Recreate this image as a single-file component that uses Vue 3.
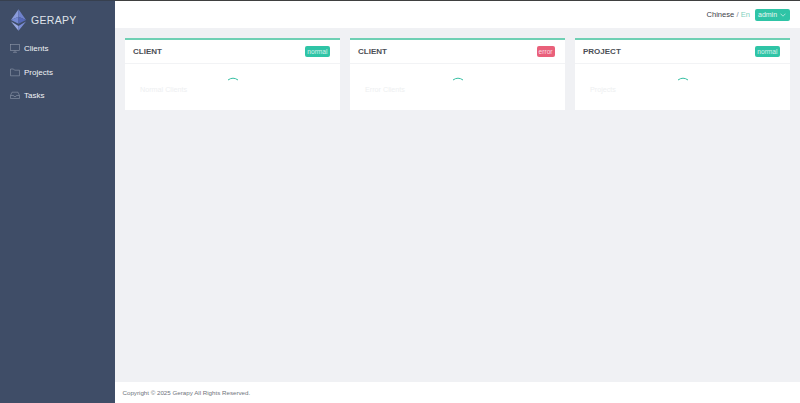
<script setup>
const cards = [
  { title: 'CLIENT', status: 'normal', kind: 'ok', label: 'Normal Clients' },
  { title: 'CLIENT', status: 'error', kind: 'bad', label: 'Error Clients' },
  { title: 'PROJECT', status: 'normal', kind: 'ok', label: 'Projects' }
]
</script>

<template>
  <div class="app">
    <aside class="side">
      <div class="brand">
        <svg class="logo" width="15" height="22" viewBox="0 0 16 23">
          <polygon points="8,0 0,11.5 8,8" fill="#8a9bdc" />
          <polygon points="8,0 16,11.5 8,8" fill="#6f82cc" />
          <polygon points="0,11.5 8,8 8,15.5" fill="#7488d2" />
          <polygon points="16,11.5 8,8 8,15.5" fill="#5568b8" />
          <polygon points="0,13 8,18 8,23" fill="#9aa9e4" />
          <polygon points="16,13 8,18 8,23" fill="#7a8dd6" />
        </svg>
        <span class="brand-name">GERAPY</span>
      </div>
      <nav class="menu">
        <div class="item">
          <svg width="10" height="9" viewBox="0 0 10 9" fill="none" stroke="#8f99ab" stroke-width=".6">
            <rect x=".5" y=".5" width="9" height="6" />
            <path d="M3 8.3h4M5 6.5v1.8" />
          </svg>
          <span>Clients</span>
        </div>
        <div class="item">
          <svg width="10" height="9" viewBox="0 0 10 9" fill="none" stroke="#8f99ab" stroke-width=".6">
            <path d="M.5 1h3l1 1.2h5v5.6h-9z" />
          </svg>
          <span>Projects</span>
        </div>
        <div class="item">
          <svg width="10" height="9" viewBox="0 0 10 9" fill="none" stroke="#8f99ab" stroke-width=".6">
            <path d="M2 1.2h6l1.5 3.3v3h-9v-3zM.5 4.5h3l.6 1h1.8l.6-1h3" />
          </svg>
          <span>Tasks</span>
        </div>
      </nav>
    </aside>
    <div class="main">
      <header class="top">
        <span class="lang">Chinese <i>/</i> <em>En</em></span>
        <button class="user">
          <span>admin</span>
          <svg width="6" height="4" viewBox="0 0 6 4" fill="none" stroke="#dff5ef" stroke-width=".7">
            <path d="M.5 .7 3 3.2 5.5 .7" />
          </svg>
        </button>
      </header>
      <section class="content">
        <article v-for="c in cards" :key="c.label" class="card">
          <div class="head">
            <h5>{{ c.title }}</h5>
            <span class="tag" :class="c.kind">{{ c.status }}</span>
          </div>
          <div class="body">
            <span class="label">{{ c.label }}</span>
            <svg class="spin" width="12" height="4" viewBox="0 0 12 4" fill="none" stroke="#36bfa3" stroke-width="1">
              <path d="M1 3Q6 -.6 11 3" />
            </svg>
          </div>
        </article>
      </section>
      <footer class="foot">Copyright © 2025 Gerapy All Rights Reserved.</footer>
    </div>
  </div>
</template>

<style>
html, body { margin: 0; }
</style>

<style scoped>
.app {
  display: flex;
  height: 403px;
  width: 800px;
  overflow: hidden;
  font-family: "Liberation Sans", sans-serif;
  background: #f0f1f4;
}
.side {
  width: 115px;
  flex: none;
  background: #3f4d67;
  border-top: 1px solid #37404f;
  box-sizing: border-box;
}
.brand {
  display: flex;
  align-items: center;
  gap: 5px;
  padding: 7px 0 0 11px;
  height: 23px;
}
.brand-name {
  color: #dfe3ea;
  font-size: 10.5px;
  letter-spacing: .3px;
}
.menu { padding-top: 6px; }
.item {
  display: flex;
  align-items: center;
  gap: 4px;
  height: 23.5px;
  padding-left: 10px;
  color: #f1f3f6;
  font-size: 8px;
}
.main {
  flex: 1;
  display: flex;
  flex-direction: column;
  min-width: 0;
}
.top {
  height: 28px;
  flex: none;
  box-sizing: border-box;
  background: #fff;
  border-top: 1px solid #3f4040;
  display: flex;
  align-items: center;
  justify-content: flex-end;
  gap: 5px;
  padding: 0 10px 0 0;
}
.lang { color: #3c4048; font-size: 7.6px; }
.lang i { font-style: normal; color: #7e8794; }
.lang em { font-style: normal; color: #7fd0bd; }
.user {
  width: 35px;
  height: 12px;
  border: 0;
  border-radius: 2px;
  background: #2fc4a6;
  color: #e8f8f4;
  font: 7px "Liberation Sans", sans-serif;
  padding: 0 4px 0 3px;
  display: flex;
  align-items: center;
  justify-content: space-between;
}
.content {
  flex: 1;
  display: grid;
  grid-template-columns: repeat(3, 215px);
  gap: 10px;
  align-content: start;
  padding: 10px 10px 0;
}
.card {
  height: 72px;
  background: #fff;
  border-top: 2px solid #6fd0b4;
  box-sizing: border-box;
  display: flex;
  flex-direction: column;
}
.head {
  height: 24px;
  flex: none;
  box-sizing: border-box;
  border-bottom: 1px solid #f2f3f5;
  display: flex;
  align-items: center;
  justify-content: space-between;
  padding: 0 10.5px 0 8px;
}
h5 {
  margin: 0;
  color: #4b4f56;
  font-size: 8px;
  font-weight: 700;
}
.tag {
  height: 11px;
  line-height: 11px;
  padding: 0 2px;
  border-radius: 2px;
  font-size: 6.6px;
  color: #d8f3ec;
}
.tag.ok { background: #2fc4a6; }
.tag.bad { background: #e9607a; color: #fbdde3; }
.body {
  flex: 1;
  position: relative;
  display: flex;
  align-items: flex-start;
  padding: 21px 0 0 15px;
}
.label {
  font-size: 7.2px;
  color: #eeeff1;
}
.spin {
  position: absolute;
  left: 101.5px;
  top: 12.5px;
}
.foot {
  height: 21px;
  flex: none;
  background: #fff;
  display: flex;
  align-items: center;
  padding-left: 7.5px;
  color: #6f747c;
  font-size: 6.2px;
}
</style>
